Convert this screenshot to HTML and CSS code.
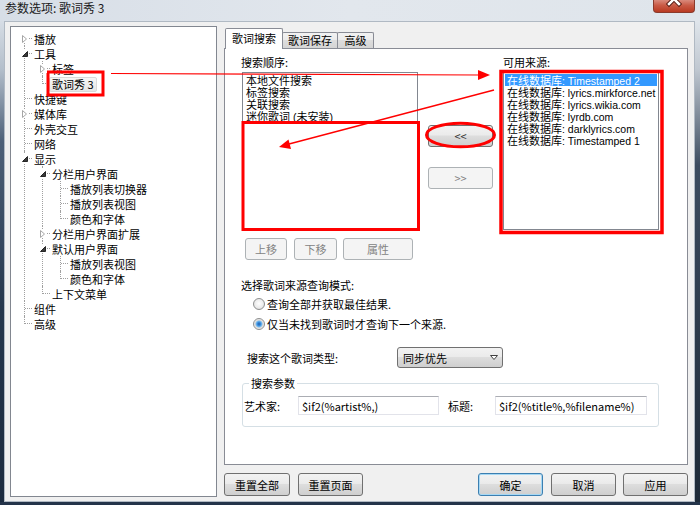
FILE: index.html
```html
<!DOCTYPE html>
<html lang="zh-CN">
<head>
  <meta charset="UTF-8">
  <meta name="viewport" content="width=device-width, initial-scale=1.0">
  <title>参数选项: 歌词秀 3</title>
  <link rel="stylesheet" href="styles.css">
</head>
<body>
  <div class="window">
    <!-- Title bar -->
    <div class="titlebar">
      <span class="title">参数选项: 歌词秀 3</span>
      <div class="close-btn">
        <svg width="42" height="13" viewBox="0 0 42 13">
          <path d="M16 -6 L26 4 M26 -6 L16 4" stroke="#5a1f16" stroke-width="4.5" stroke-linecap="square"/>
          <path d="M16 -6 L26 4 M26 -6 L16 4" stroke="#ffffff" stroke-width="2.5" stroke-linecap="square"/>
        </svg>
      </div>
    </div>

    <div class="frame">
      <div class="edge edge-left"></div>
      <div class="client">

        <!-- Preferences tree -->
        <div class="tree-box">
          <ul class="tree">
            <li><div class="node"><span class="exp"><svg width="5" height="8" viewBox="0 0 5 8"><path d="M0.5 0.5 L4.5 4 L0.5 7.5 Z" fill="#fff" stroke="#a6a6a6"/></svg></span><span class="label">播放</span></div></li>
            <li>
              <div class="node"><span class="exp"><svg width="6" height="6" viewBox="0 0 6 6"><path d="M5.5 0.5 V5.5 H0.5 Z" fill="#3a3a3a" stroke="#262626"/></svg></span><span class="label">工具</span></div>
              <ul>
                <li><div class="node"><span class="exp"><svg width="5" height="8" viewBox="0 0 5 8"><path d="M0.5 0.5 L4.5 4 L0.5 7.5 Z" fill="#fff" stroke="#a6a6a6"/></svg></span><span class="label">标签</span></div></li>
                <li><div class="node"><span class="label selected">歌词秀 3</span></div></li>
              </ul>
            </li>
            <li><div class="node"><span class="label">快捷键</span></div></li>
            <li><div class="node"><span class="exp"><svg width="5" height="8" viewBox="0 0 5 8"><path d="M0.5 0.5 L4.5 4 L0.5 7.5 Z" fill="#fff" stroke="#a6a6a6"/></svg></span><span class="label">媒体库</span></div></li>
            <li><div class="node"><span class="label">外壳交互</span></div></li>
            <li><div class="node"><span class="label">网络</span></div></li>
            <li>
              <div class="node"><span class="exp"><svg width="6" height="6" viewBox="0 0 6 6"><path d="M5.5 0.5 V5.5 H0.5 Z" fill="#3a3a3a" stroke="#262626"/></svg></span><span class="label">显示</span></div>
              <ul>
                <li>
                  <div class="node"><span class="exp"><svg width="6" height="6" viewBox="0 0 6 6"><path d="M5.5 0.5 V5.5 H0.5 Z" fill="#3a3a3a" stroke="#262626"/></svg></span><span class="label">分栏用户界面</span></div>
                  <ul>
                    <li><div class="node"><span class="label">播放列表切换器</span></div></li>
                    <li><div class="node"><span class="label">播放列表视图</span></div></li>
                    <li><div class="node"><span class="label">颜色和字体</span></div></li>
                  </ul>
                </li>
                <li><div class="node"><span class="exp"><svg width="5" height="8" viewBox="0 0 5 8"><path d="M0.5 0.5 L4.5 4 L0.5 7.5 Z" fill="#fff" stroke="#a6a6a6"/></svg></span><span class="label">分栏用户界面扩展</span></div></li>
                <li>
                  <div class="node"><span class="exp"><svg width="6" height="6" viewBox="0 0 6 6"><path d="M5.5 0.5 V5.5 H0.5 Z" fill="#3a3a3a" stroke="#262626"/></svg></span><span class="label">默认用户界面</span></div>
                  <ul>
                    <li><div class="node"><span class="label">播放列表视图</span></div></li>
                    <li><div class="node"><span class="label">颜色和字体</span></div></li>
                  </ul>
                </li>
                <li><div class="node"><span class="label">上下文菜单</span></div></li>
              </ul>
            </li>
            <li><div class="node"><span class="label">组件</span></div></li>
            <li><div class="node"><span class="label">高级</span></div></li>
          </ul>
        </div>

        <!-- Page area -->
        <div class="main">
          <div class="tabs">
            <div class="tab active">歌词搜索</div>
            <div class="tab tab-save">歌词保存</div>
            <div class="tab tab-adv">高级</div>
          </div>

          <div class="panel">
            <div class="sources">
              <div class="col col-order">
                <div class="cap">搜索顺序:</div>
                <div class="listbox list-order">
                  <div class="item">本地文件搜索</div>
                  <div class="item">标签搜索</div>
                  <div class="item">关联搜索</div>
                  <div class="item">迷你歌词<span class="lat"> (</span>未安装<span class="lat">)</span></div>
                </div>
                <div class="btn-row">
                  <button class="btn btn-up" disabled>上移</button>
                  <button class="btn btn-down" disabled>下移</button>
                  <button class="btn btn-prop" disabled>属性</button>
                </div>
              </div>

              <div class="col col-move">
                <button class="btn btn-move">&lt;&lt;</button>
                <button class="btn btn-move btn-right" disabled>&gt;&gt;</button>
              </div>

              <div class="col col-avail">
                <div class="cap">可用来源:</div>
                <div class="listbox list-avail">
                  <div class="item selected">在线数据库<span class="lat">: Timestamped 2</span></div>
                  <div class="item">在线数据库<span class="lat">: lyrics.mirkforce.net</span></div>
                  <div class="item">在线数据库<span class="lat">: lyrics.wikia.com</span></div>
                  <div class="item">在线数据库<span class="lat">: lyrdb.com</span></div>
                  <div class="item">在线数据库<span class="lat">: darklyrics.com</span></div>
                  <div class="item">在线数据库<span class="lat">: Timestamped 1</span></div>
                </div>
              </div>
            </div>

            <!-- Query mode -->
            <div class="cap mode-cap">选择歌词来源查询模式:</div>
            <div class="radio-row"><span class="radio"></span>查询全部并获取最佳结果.</div>
            <div class="radio-row"><span class="radio checked"></span>仅当未找到歌词时才查询下一个来源.</div>

            <div class="type-row">
              <span class="type-label">搜索这个歌词类型:</span>
              <div class="combo">
                <span>同步优先</span>
                <svg width="8" height="5" viewBox="0 0 8 5"><path d="M0.5 0.5 H7.5 L4 4.5 Z" fill="#fff" stroke="#404040"/></svg>
              </div>
            </div>

            <!-- Search parameters -->
            <fieldset class="group">
              <legend>搜索参数</legend>
              <div class="param-row">
                <span class="param-label">艺术家:</span>
                <input type="text" class="field field-artist" value="$if2(%artist%,)">
                <span class="param-label param-title">标题:</span>
                <input type="text" class="field field-title" value="$if2(%title%,%filename%)">
              </div>
            </fieldset>
          </div>

          <div class="footer">
            <button class="btn foot-btn btn-reset-all">重置全部</button>
            <button class="btn foot-btn">重置页面</button>
            <button class="btn foot-btn btn-ok">确定</button>
            <button class="btn foot-btn">取消</button>
            <button class="btn foot-btn btn-apply">应用</button>
          </div>
        </div>

      </div>
      <div class="edge edge-right"></div>
    </div>
    <div class="edge-bottom"></div>

    <!-- Red annotations drawn over the screenshot -->
    <svg class="annotations" width="700" height="505" viewBox="0 0 700 505">
      <rect x="48" y="72" width="55" height="23" fill="none" stroke="#ff0000" stroke-width="3"/>
      <path d="M111 73.5 L480 75" stroke="#ff0000" stroke-width="1.2" fill="none"/>
      <path d="M490 75 L478 70 L478 80 Z" fill="#ff0000"/>
      <path d="M494 90 L289 144" stroke="#ff0000" stroke-width="1.3" fill="none"/>
      <path d="M279 147 L291 149 L288.5 139.5 Z" fill="#ff0000"/>
      <rect x="243" y="122.5" width="175.5" height="107" fill="none" stroke="#ff0000" stroke-width="3"/>
      <ellipse cx="460.5" cy="135" rx="34" ry="11.8" fill="none" stroke="#ff0000" stroke-width="3"/>
      <rect x="501" y="71.5" width="161" height="161" fill="none" stroke="#ff0000" stroke-width="3.5"/>
    </svg>
  </div>
</body>
</html>
```

FILE: styles.css
```css
* {
  box-sizing: border-box;
}
body {
  margin: 0;
  width: 700px;
  height: 505px;
  overflow: hidden;
  font-family: "Noto Sans CJK SC", "Noto Sans", sans-serif;
  font-size: 11px;
  color: #000;
  background: #2b3d52;
}
.window {
  position: relative;
  width: 700px;
  height: 505px;
  display: flex;
  flex-direction: column;
}

/* title bar */
.titlebar {
  height: 21px;
  display: flex;
  align-items: flex-start;
  background: linear-gradient(to right, #d7dee7, #e2e7ed 50%, #dfe5eb);
}
.title {
  font-size: 12px;
  line-height: 16px;
  margin: 0 0 0 5px;
  color: #1a1a1a;
}
.close-btn {
  margin-left: auto;
  margin-right: 5px;
  width: 42px;
  height: 13px;
  border: 1px solid #8a3a2c;
  border-top: none;
  border-radius: 0 0 4px 4px;
  background: linear-gradient(#d98a7c, #c95a45 45%, #b93a22);
  overflow: hidden;
}
.close-btn svg {
  display: block;
  margin: 0 -1px;
}

/* window frame */
.frame {
  flex: 1;
  display: flex;
  min-height: 0;
}
.edge-left {
  width: 4px;
  background: linear-gradient(#d6dde5, #b4bfcb 10%, #4d6078 25%, #25374d 60%, #1c2b3f);
}
.edge-right {
  width: 5px;
  background: linear-gradient(#dfe5eb, #c0c8d1 10%, #3c4c60 30%, #1e2a38);
}
.edge-bottom {
  height: 3px;
  background: #24344a;
}
.client {
  width: 691px;
  background: #f0f0f0;
  border: 1px solid #b0b9c3;
  padding: 4px 6px 4px 5px;
  display: grid;
  grid-template-columns: 207px 464px;
  column-gap: 7px;
}

/* tree */
.tree-box {
  background: #fff;
  border: 1px solid #828790;
  padding-top: 4px;
  overflow: hidden;
}
.tree, .tree ul {
  list-style: none;
  margin: 0;
  padding: 0;
}
.tree ul {
  margin-left: 18px;
}
.tree li {
  position: relative;
}
.tree li::before {
  content: "";
  position: absolute;
  left: 13px;
  top: 0;
  bottom: 0;
  border-left: 1px dotted #a0a0a0;
}
.tree li:last-child::before {
  bottom: auto;
  height: 8px;
}
.tree > li:first-child::before {
  top: 7px;
}
.node {
  position: relative;
  height: 15px;
  padding-left: 20px;
  white-space: nowrap;
}
.node::before {
  content: "";
  position: absolute;
  left: 14px;
  top: 7px;
  width: 7px;
  border-top: 1px dotted #a0a0a0;
}
.exp {
  position: absolute;
  left: 9px;
  top: 3px;
  width: 9px;
  height: 9px;
  background: #fff;
  display: flex;
  align-items: center;
  justify-content: center;
  z-index: 1;
}
.exp svg {
  display: block;
}
.label {
  display: inline-block;
  height: 15px;
  line-height: 13px;
  padding: 0 2px;
  border: 1px solid transparent;
  border-radius: 2px;
  position: relative;
}
.label.selected {
  background: linear-gradient(#f6f6f6, #e6e6e6);
  border-color: #d9d9d9;
}

/* right side */
.main {
  display: flex;
  flex-direction: column;
}
.tabs {
  height: 20px;
  margin-top: 2px;
  margin-left: 1px;
  display: flex;
  align-items: flex-end;
  position: relative;
  z-index: 1;
}
.tab {
  height: 16px;
  line-height: 15px;
  text-align: center;
  border: 1px solid #898c95;
  border-bottom: none;
  border-radius: 2px 2px 0 0;
  background: linear-gradient(#f2f2f2, #ebebeb 50%, #dddddd 50%, #d5d5d5);
}
.tab.active {
  width: 58px;
  height: 21px;
  margin-bottom: -1px;
  line-height: 19px;
  background: #fff;
  position: relative;
  z-index: 2;
}
.tab-save {
  width: 56px;
  margin-left: -1px;
}
.tab-adv {
  width: 37px;
  margin-left: -1px;
}
.panel {
  height: 417px;
  background: #fff;
  border: 1px solid #898c95;
  padding: 7px 0 0 16px;
}
.cap {
  line-height: 12px;
  height: 12px;
  white-space: nowrap;
}
.sources {
  display: flex;
  align-items: flex-start;
}
.col-order {
  width: 177px;
}
.col-order .cap, .col-avail .cap {
  margin-bottom: 4px;
}
.listbox {
  height: 158px;
  border: 1px solid #828790;
  background: #fff;
  padding: 1px;
  overflow: hidden;
}
.list-order {
  margin-left: 1px;
}
.item {
  height: 12px;
  line-height: 12px;
  padding: 0 2px;
  white-space: nowrap;
}
.item.selected {
  background: #3399ff;
  color: #fff;
}
.lat {
  font-family: "Liberation Sans", Arial, sans-serif;
  font-size: 10.5px;
}
.btn-row {
  display: flex;
  margin: 8px 0 0 4px;
}
.col-move {
  width: 65px;
  margin: 0 10px;
  padding-top: 69px;
  display: flex;
  flex-direction: column;
}
.col-avail {
  width: 156px;
}

/* buttons */
.btn {
  font: inherit;
  height: 22px;
  padding: 0;
  line-height: 20px;
  text-align: center;
  color: #000;
  border: 1px solid #707070;
  border-radius: 3px;
  background: linear-gradient(#f2f2f2, #ebebeb 45%, #dddddd 50%, #cfcfcf);
}
.btn:disabled {
  color: #838383;
  border-color: #adb2b5;
  background: #f4f4f4;
}
.btn-up {
  width: 42px;
}
.btn-down {
  width: 43px;
  margin-left: 7px;
}
.btn-prop {
  width: 70px;
  margin-left: 6px;
}
.btn-move {
  width: 65px;
  color: #333;
}
.btn-right {
  margin-top: 20px;
}

/* query mode */
.mode-cap {
  margin-top: 19px;
}
.radio-row {
  height: 20px;
  display: flex;
  align-items: center;
  padding-left: 12px;
  white-space: nowrap;
}
.mode-cap + .radio-row {
  margin-top: 3px;
}
.radio {
  width: 12px;
  height: 12px;
  margin-right: 2px;
  border-radius: 50%;
  border: 1px solid #8e8f8f;
  background: radial-gradient(circle at 50% 45%, #ffffff, #ececec 55%, #d4d4d4);
}
.radio.checked {
  background: radial-gradient(circle at 50% 50%, #1d5fb0 0, #3f8fdc 1.8px, #86c6f3 3.2px, #d8d8d8 3.8px, #f6f6f6 5.5px);
}
.type-row {
  height: 21px;
  margin-top: 13px;
  padding-left: 6px;
  display: flex;
  align-items: center;
}
.type-label {
  width: 150px;
}
.combo {
  width: 106px;
  height: 21px;
  border: 1px solid #707070;
  border-radius: 3px;
  background: linear-gradient(#f2f2f2, #ebebeb 45%, #dddddd 50%, #cfcfcf);
  display: flex;
  align-items: center;
  justify-content: space-between;
  padding: 0 4px 0 5px;
}

/* group box */
.group {
  margin: 9px 0 0 1px;
  width: 417px;
  min-width: 0;
  border: 1px solid #d5dfe5;
  border-radius: 3px;
  padding: 7px 0 11px 1px;
}
.group legend {
  margin-left: 5px;
  padding: 0 2px;
  line-height: 12px;
}
.param-row {
  display: flex;
  align-items: center;
  height: 19px;
}
.param-label {
  width: 54px;
  white-space: nowrap;
}
.param-title {
  width: 47px;
  margin-left: 9px;
}
.field {
  font: inherit;
  height: 19px;
  padding: 0 3px;
  border: 1px solid #e2e3ea;
  border-top-color: #abadb3;
  background: #fff;
  color: #000;
}
.field-artist {
  width: 141px;
}
.field-title {
  width: 152px;
}

/* footer */
.footer {
  display: flex;
  margin-top: 8px;
}
.foot-btn {
  width: 65px;
  height: 23px;
}
.btn-reset-all {
  width: 66px;
  margin-right: 8px;
}
.btn-ok {
  margin-left: auto;
  margin-right: 8px;
  border-color: #3c7fb1;
  box-shadow: inset 0 0 0 1px #a6d8f4;
}
.btn-apply {
  margin-left: 7px;
}

/* annotations */
.annotations {
  position: absolute;
  left: 0;
  top: 0;
  pointer-events: none;
}
```
